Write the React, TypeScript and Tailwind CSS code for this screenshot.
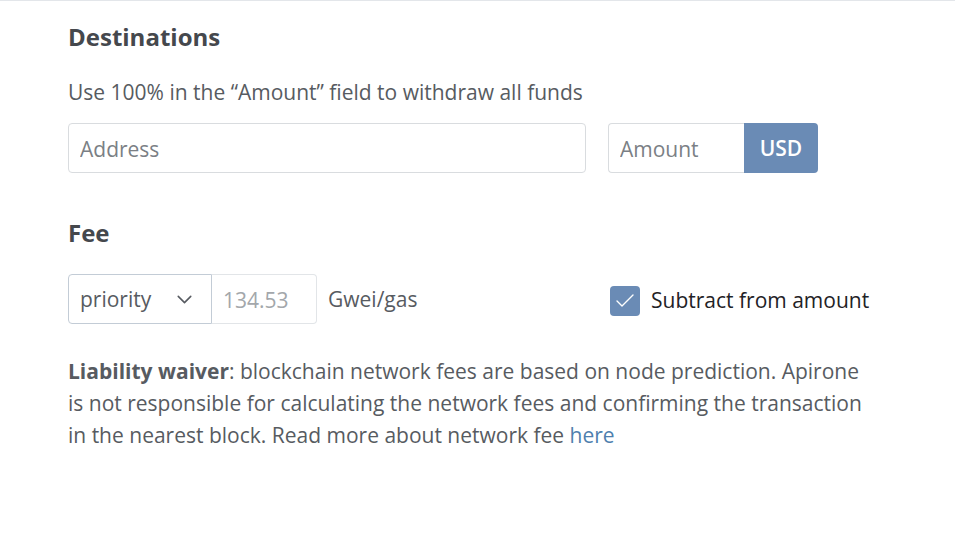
import { Check, ChevronDown } from "lucide-react";

// Withdraw form: destinations, fee selector and liability note
export default function App() {
  return (
    <div
      className="min-h-[547px] w-full border-t border-[#e3e6ea] bg-white text-[#575b61]"
      style={{ fontFamily: '"Open Sans", "Noto Sans", sans-serif' }}
    >
      <div className="w-[812px] pl-[68px] pt-[21px] box-content">
        <h2 className="text-[24px] font-bold leading-[30px] text-[#45484d]">Destinations</h2>
        <p className="mt-[25px] text-[21px] leading-[30px]">
          Use 100% in the “Amount” field to withdraw all funds
        </p>

        <div className="mt-[16px] flex gap-[22px]">
          <input
            placeholder="Address"
            className="h-[50px] w-[518px] rounded-[4px] border border-[#d9dcdf] px-[11px] pt-[2px] text-[21px] outline-none placeholder:text-[#7b7f85]"
          />
          <div className="flex h-[50px]">
            <input
              placeholder="Amount"
              className="h-[50px] w-[136px] rounded-l-[4px] border border-r-0 border-[#d9dcdf] px-[11px] pt-[2px] text-[21px] outline-none placeholder:text-[#7b7f85]"
            />
            <button className="h-[50px] w-[74px] rounded-r-[4px] bg-[#6a8bb5] pt-[2px] text-[21px] font-semibold text-white">
              USD
            </button>
          </div>
        </div>

        <h2 className="mt-[45px] text-[24px] font-bold leading-[30px] text-[#45484d]">Fee</h2>

        <div className="mt-[26px] flex items-center">
          <div className="flex w-[542px] items-center">
            <div className="flex h-[50px] w-[144px] items-center justify-between rounded-l-[4px] border border-[#c3ccd6] pl-[11px] pr-[14px] text-[21px] text-[#575b61]">
              <span className="pt-[2px]">priority</span>
              <ChevronDown size={25} strokeWidth={1.5} className="text-[#575b61]" />
            </div>
            <input
              placeholder="134.53"
              className="h-[50px] w-[105px] rounded-r-[4px] border border-l-0 border-[#e2e5e8] px-[11px] pt-[2px] text-[21px] outline-none placeholder:text-[#a3a7ab]"
            />
            <span className="ml-[11px] pt-[2px] text-[21px]">Gwei/gas</span>
          </div>

          <label className="mt-[4px] flex items-center gap-[11px] text-[21px] text-[#1f2226]">
            <span className="flex h-[30px] w-[30px] items-center justify-center rounded-[4px] bg-[#6a8bb5]">
              <Check size={24} strokeWidth={1.4} className="text-white" />
            </span>
            Subtract from amount
          </label>
        </div>

        <p className="mt-[31px] w-[806px] text-[21px] leading-[32px]">
          <span className="font-bold">Liability waiver</span>: blockchain network fees are based on
          node prediction. Apirone is not responsible for calculating the network fees and confirming
          the transaction in the nearest block. Read more about network fee{" "}
          <a className="text-[#4f7fae]">here</a>
        </p>
      </div>
    </div>
  );
}
